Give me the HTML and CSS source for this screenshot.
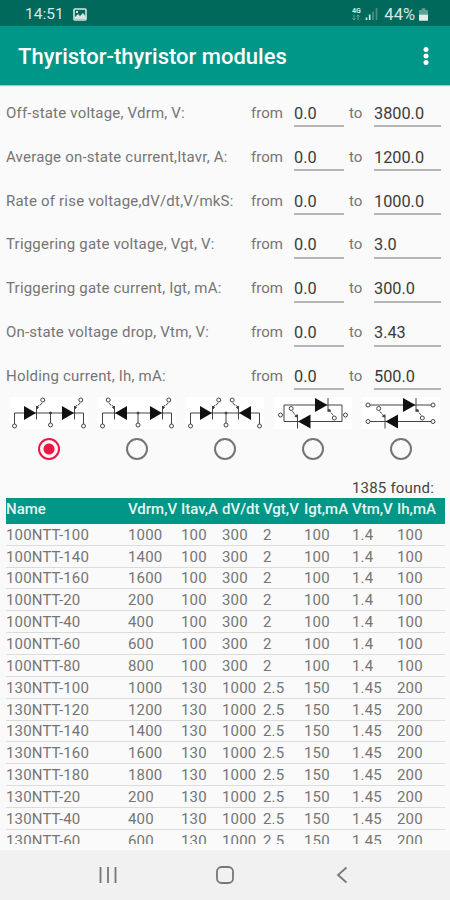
FILE: index.html
```
<!DOCTYPE html>
<html lang="en">
<head>
<meta charset="UTF-8">
<meta name="viewport" content="width=device-width, initial-scale=1.0">
<title>Thyristor-thyristor modules</title>
<link rel="stylesheet" href="styles.css">
</head>
<body>
<div class="status-bar">
    <span class="time">14:51</span>
    <svg class="picture" width="14" height="13" viewBox="0 0 14 13"><rect x="1" y="1" width="12" height="11" rx="1" fill="none" stroke="#d5e6e3" stroke-width="1.6"/><path d="M2 11V9l3-3 2 2 3-3 3 4v2z" fill="#d5e6e3"/><rect x="3" y="3" width="2" height="2" fill="#d5e6e3"/></svg>
    <span class="network"><b>4G</b><svg width="10" height="6" viewBox="0 0 10 6"><path d="M3 0v5M1.500 3.500L3 5l1.500-1.500M7 5V0M5.500 1.500L7 0l1.500 1.500" fill="none" stroke="#6ba59c" stroke-width="1"/></svg></span>
    <svg class="signal" width="13" height="12" viewBox="0 0 13 12"><path d="M1.500 12V9.500M4.700 12V6.500" stroke="#d5e6e3" stroke-width="1.700"/><path d="M8 12V3.500M11.500 12V0" stroke="#4b9187" stroke-width="1.700"/></svg>
    <span class="percent">44%</span>
    <svg class="battery" width="9" height="13" viewBox="0 0 10 14"><path d="M3 0h4v2h2q1 0 1 1v4H0V3q0-1 1-1h2z" fill="#5f9f96"/><path d="M0 7h10v6q0 1-1 1H1q-1 0-1-1z" fill="#e0efed"/></svg>
</div>
<header class="app-bar">
    <h1>Thyristor-thyristor modules</h1>
    <svg class="menu" width="6" height="20" viewBox="0 0 6 20"><circle cx="3" cy="3.500" r="2.500"/><circle cx="3" cy="10" r="2.500"/><circle cx="3" cy="16.500" r="2.500"/></svg>
</header>

<form class="filters">
    <div class="filter"><label>Off-state voltage, Vdrm, V:</label><span>from</span><input type="text" value="0.0"><span class="to">to</span><input type="text" value="3800.0"></div>
    <div class="filter"><label>Average on-state current,Itavr, A:</label><span>from</span><input type="text" value="0.0"><span class="to">to</span><input type="text" value="1200.0"></div>
    <div class="filter"><label>Rate of rise voltage,dV/dt,V/mkS:</label><span>from</span><input type="text" value="0.0"><span class="to">to</span><input type="text" value="1000.0"></div>
    <div class="filter"><label>Triggering gate voltage, Vgt, V:</label><span>from</span><input type="text" value="0.0"><span class="to">to</span><input type="text" value="3.0"></div>
    <div class="filter"><label>Triggering gate current, Igt, mA:</label><span>from</span><input type="text" value="0.0"><span class="to">to</span><input type="text" value="300.0"></div>
    <div class="filter"><label>On-state voltage drop, Vtm, V:</label><span>from</span><input type="text" value="0.0"><span class="to">to</span><input type="text" value="3.43"></div>
    <div class="filter"><label>Holding current, Ih, mA:</label><span>from</span><input type="text" value="0.0"><span class="to">to</span><input type="text" value="500.0"></div>
</form>

<!-- thyristor symbol: anode on the left, gate goes up or down to the right -->
<svg class="defs" width="0" height="0">
    <defs>
        <g id="scr">
            <path d="M-12 -7L0 0L-12 7z" fill="#111" stroke="none"/>
            <path d="M.5 -7V6.500"/>
            <path d="M1 -5.500Q2 -7.500 4 -8T6 -11" stroke-dasharray="3 .6"/>
            <path d="M.5 -4l.3-2.500 1.700 1z" fill="#333"/>
            <circle cx="6.800" cy="-13" r="2"/>
        </g>
        <g id="scr-down">
            <path d="M-12.500 -7L0 0L-12.500 7z" fill="#111" stroke="none"/>
            <path d="M.5 -7V7"/>
            <path d="M1 5.500Q3 6 4 8T6.500 10.500" stroke-dasharray="3 .6"/>
            <path d="M.5 4.500l2.500.5-1.500 1.700z" fill="#333"/>
            <circle cx="6.800" cy="13" r="2"/>
        </g>
    </defs>
</svg>

<div class="schemes">
    <label class="scheme">
        <svg viewBox="0 0 88 36"><rect class="paper" x="5" y="3" width="78" height="32"/>
            <path d="M9.500 30V19H78.500V30M45.500 19V29"/><circle cx="45.500" cy="19" r="1" fill="#333"/>
            <circle cx="9.500" cy="32" r="2"/><circle cx="45.500" cy="31" r="2"/><circle cx="78.500" cy="32" r="2"/>
            <use href="#scr" x="31" y="19"/><use href="#scr" x="69" y="19"/></svg>
        <input type="radio" name="scheme" checked>
    </label>
    <label class="scheme">
        <svg viewBox="0 0 88 36"><rect class="paper" x="5" y="3" width="78" height="32"/>
            <path d="M9.500 30V19H78.500V30M45 19V29"/><circle cx="45" cy="19" r="1" fill="#333"/>
            <circle cx="9.500" cy="32" r="2"/><circle cx="45" cy="31" r="2"/><circle cx="78.500" cy="32" r="2"/>
            <use href="#scr" transform="translate(22 19) scale(-1 1)"/><use href="#scr" x="69" y="19"/></svg>
        <input type="radio" name="scheme">
    </label>
    <label class="scheme">
        <svg viewBox="0 0 88 36"><rect class="paper" x="5" y="3" width="78" height="32"/>
            <path d="M9.500 30V19H78.500V30M45 19V29"/><circle cx="45" cy="19" r="1" fill="#333"/>
            <circle cx="9.500" cy="32" r="2"/><circle cx="45" cy="31" r="2"/><circle cx="78.500" cy="32" r="2"/>
            <use href="#scr" x="31" y="19"/><use href="#scr" transform="translate(58 19) scale(-1 1)"/></svg>
        <input type="radio" name="scheme">
    </label>
    <label class="scheme">
        <svg viewBox="0 0 88 36"><rect class="paper" x="5" y="3" width="78" height="32"/>
            <path d="M15 11H73V27.500H15z"/>
            <circle cx="11.500" cy="21" r="2"/><circle cx="76.500" cy="21" r="2"/>
            <use href="#scr-down" x="58.500" y="11"/><use href="#scr-down" transform="translate(29 27.500) rotate(180)"/></svg>
        <input type="radio" name="scheme">
    </label>
    <label class="scheme">
        <svg viewBox="0 0 88 36"><rect class="paper" x="5" y="3" width="78" height="32"/>
            <path d="M13 11H74M13 27.500H74"/>
            <circle cx="11" cy="11" r="2"/><circle cx="76" cy="11" r="2"/><circle cx="11" cy="27.500" r="2"/><circle cx="76" cy="27.500" r="2"/>
            <use href="#scr-down" x="58.500" y="11"/><use href="#scr-down" transform="translate(28.500 27.500) rotate(180)"/></svg>
        <input type="radio" name="scheme">
    </label>
</div>

<p class="found">1385 found:</p>

<div class="list">
<table>
    <colgroup><col class="c-name"><col class="c-vdrm"><col class="c-itav"><col class="c-dvdt"><col class="c-vgt"><col class="c-igt"><col class="c-vtm"><col class="c-ih"></colgroup>
    <thead>
        <tr><th>Name</th><th>Vdrm,V</th><th>Itav,A</th><th>dV/dt</th><th>Vgt,V</th><th>Igt,mA</th><th>Vtm,V</th><th>Ih,mA</th></tr>
    </thead>
    <tbody>
        <tr><td>100NTT-100</td><td>1000</td><td>100</td><td>300</td><td>2</td><td>100</td><td>1.4</td><td>100</td></tr>
        <tr><td>100NTT-140</td><td>1400</td><td>100</td><td>300</td><td>2</td><td>100</td><td>1.4</td><td>100</td></tr>
        <tr><td>100NTT-160</td><td>1600</td><td>100</td><td>300</td><td>2</td><td>100</td><td>1.4</td><td>100</td></tr>
        <tr><td>100NTT-20</td><td>200</td><td>100</td><td>300</td><td>2</td><td>100</td><td>1.4</td><td>100</td></tr>
        <tr><td>100NTT-40</td><td>400</td><td>100</td><td>300</td><td>2</td><td>100</td><td>1.4</td><td>100</td></tr>
        <tr><td>100NTT-60</td><td>600</td><td>100</td><td>300</td><td>2</td><td>100</td><td>1.4</td><td>100</td></tr>
        <tr><td>100NTT-80</td><td>800</td><td>100</td><td>300</td><td>2</td><td>100</td><td>1.4</td><td>100</td></tr>
        <tr><td>130NTT-100</td><td>1000</td><td>130</td><td>1000</td><td>2.5</td><td>150</td><td>1.45</td><td>200</td></tr>
        <tr><td>130NTT-120</td><td>1200</td><td>130</td><td>1000</td><td>2.5</td><td>150</td><td>1.45</td><td>200</td></tr>
        <tr><td>130NTT-140</td><td>1400</td><td>130</td><td>1000</td><td>2.5</td><td>150</td><td>1.45</td><td>200</td></tr>
        <tr><td>130NTT-160</td><td>1600</td><td>130</td><td>1000</td><td>2.5</td><td>150</td><td>1.45</td><td>200</td></tr>
        <tr><td>130NTT-180</td><td>1800</td><td>130</td><td>1000</td><td>2.5</td><td>150</td><td>1.45</td><td>200</td></tr>
        <tr><td>130NTT-20</td><td>200</td><td>130</td><td>1000</td><td>2.5</td><td>150</td><td>1.45</td><td>200</td></tr>
        <tr><td>130NTT-40</td><td>400</td><td>130</td><td>1000</td><td>2.5</td><td>150</td><td>1.45</td><td>200</td></tr>
        <tr><td>130NTT-60</td><td>600</td><td>130</td><td>1000</td><td>2.5</td><td>150</td><td>1.45</td><td>200</td></tr>
    </tbody>
</table>
</div>

<nav class="nav-bar">
    <svg width="18" height="18" viewBox="0 0 18 18"><path d="M1.500 1v16M9 1v16M16.500 1v16"/></svg>
    <svg width="18" height="18" viewBox="0 0 18 18"><rect x="1" y="1" width="16" height="16" rx="4.500"/></svg>
    <svg width="18" height="18" viewBox="0 0 18 18"><path d="M13.500 1.500L5 9l8.500 7.500"/></svg>
</nav>
</body>
</html>
```
FILE: styles.css
```
body {
    margin: 0;
    width: 450px;
    height: 900px;
    overflow: hidden;
    display: flex;
    flex-direction: column;
    background-color: #fafafa;
    font-family: Roboto, sans-serif;
    font-size: 15px;
    color: #757575;
}
.status-bar {
    height: 26px;
    flex: none;
    box-sizing: border-box;
    padding: 2px 22px 0 25px;
    display: flex;
    align-items: center;
    background-color: #00695c;
    color: #d5e6e3;
}
.time {
    font-size: 15.5px;
    width: 48px;
}
.network {
    margin-left: auto;
    width: 12px;
    display: flex;
    flex-direction: column;
    align-items: center;
    font-size: 7px;
    line-height: 7px;
}
.signal {
    margin: 0 6px 0 3px;
}
.percent {
    font-size: 16.5px;
    margin-right: 4px;
}
.app-bar {
    height: 59px;
    flex: none;
    box-sizing: border-box;
    padding: 0 21px 0 18px;
    display: flex;
    align-items: center;
    justify-content: space-between;
    background-color: #009688;
    box-shadow: 0 1px 1px rgba(0, 0, 0, 0.25);
}
.app-bar h1 {
    margin: 0;
    padding-top: 2px;
    font-size: 22px;
    font-weight: 500;
    color: #fff;
}
.menu {
    fill: #fff;
}
.filters {
    margin: 0;
    padding: 6px 0 2px 6px;
}
.filter {
    height: 43.83px;
    display: grid;
    grid-template-columns: 245px 43px 50px 30px 67px;
    align-items: center;
    white-space: nowrap;
}
.filter label {
    letter-spacing: 0.2px;
}
.filter .to {
    padding-left: 5px;
}
.filter input {
    width: 100%;
    height: 26px;
    box-sizing: border-box;
    border: none;
    border-bottom: 2px solid #b5b5b5;
    padding: 0;
    margin-top: 3px;
    background: none;
    font-family: Roboto, sans-serif;
    font-size: 16.3px;
    color: #3a3a3a;
}
.defs {
    position: absolute;
}
.schemes {
    display: grid;
    grid-template-columns: repeat(5, 88px);
    padding-left: 5px;
    margin-top: -6px;
}
.scheme {
    display: flex;
    flex-direction: column;
    align-items: center;
}
.scheme svg {
    width: 88px;
    height: 36px;
    fill: none;
    stroke: #444;
    stroke-width: 1;
}
.scheme .paper {
    fill: #fff;
    stroke: none;
}
.scheme input {
    appearance: none;
    width: 22px;
    height: 22px;
    margin: 8px 0 1px;
    border: 2px solid #757575;
    border-radius: 50%;
}
.scheme input:checked {
    border-color: #ee1744;
    background: radial-gradient(circle, #ee1744 5px, transparent 6px);
}
.found {
    margin: 18px 16px 0 0;
    height: 19px;
    line-height: 19px;
    text-align: right;
    letter-spacing: 0.2px;
    color: #444;
}
.list {
    height: 346px;
    margin: 0 5px 0 6px;
    overflow: hidden;
}
table {
    width: 439px;
    table-layout: fixed;
    border-collapse: separate;
    border-spacing: 0;
}
.c-name { width: 122px; }
.c-vdrm { width: 53px; }
.c-itav { width: 41px; }
.c-dvdt { width: 41px; }
.c-vgt { width: 41px; }
.c-igt { width: 48px; }
.c-vtm { width: 45px; }
.c-ih { width: 48px; }
th {
    height: 26px;
    padding: 0 0 3px;
    box-sizing: border-box;
    background-color: #009688;
    color: #e8f5f3;
    font-weight: 500;
    text-align: left;
    white-space: nowrap;
}
td {
    height: 21.87px;
    padding: 1px 0 0;
    box-sizing: border-box;
    border-bottom: 1px solid #dcdcdc;
    letter-spacing: 0.15px;
    white-space: nowrap;
}
.nav-bar {
    margin-top: auto;
    height: 50px;
    flex: none;
    display: flex;
    justify-content: center;
    align-items: center;
    gap: 99px;
    background-color: #f1f1f1;
}
.nav-bar svg {
    fill: none;
    stroke: #777;
    stroke-width: 1.8;
}
```
